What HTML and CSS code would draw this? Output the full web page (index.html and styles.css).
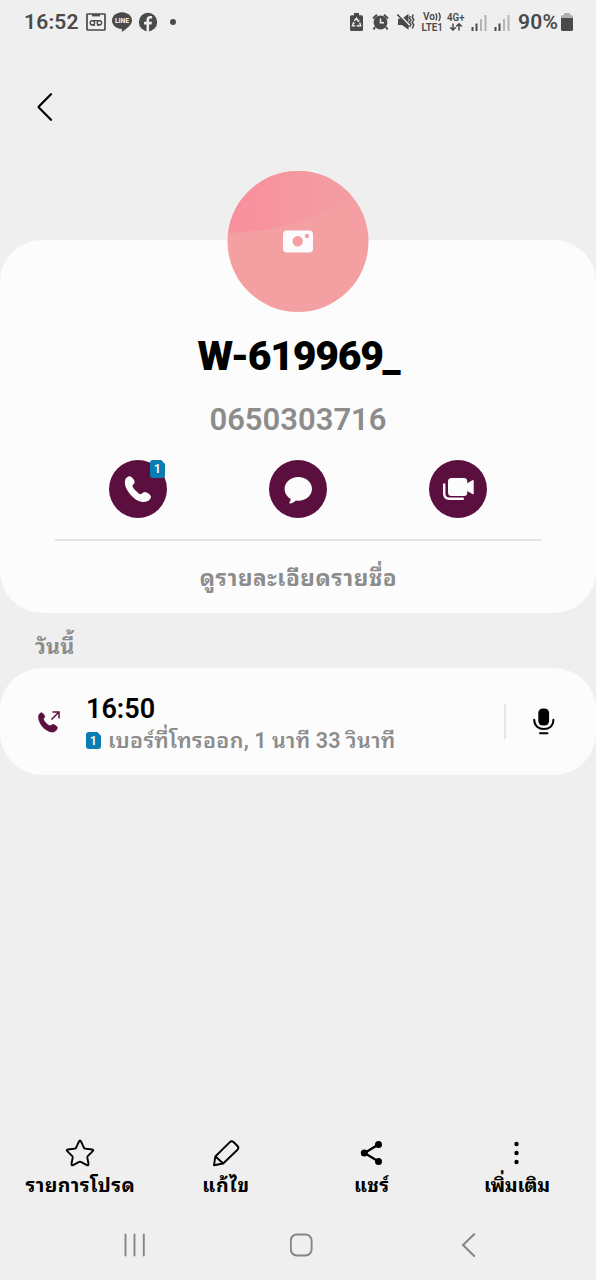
FILE: index.html
```html
<!DOCTYPE html>
<html lang="th">
<head>
<meta charset="utf-8">
<title>W-619969_</title>
<link rel="stylesheet" href="styles.css">
</head>
<body>
<div class="screen">
  <div class="status">
    <div class="status-left">
      <span class="clock">16:52</span>
      <svg class="s-box" width="20" height="18" viewBox="0 0 20 18"><rect x="1" y="1" width="18" height="16" rx=".6" fill="none" stroke="#4a4a4a" stroke-width="1.7"/><path d="M6 1h8v2.400H6z" fill="#4a4a4a"/><g fill="none" stroke="#4a4a4a" stroke-width="1.400"><circle cx="6.400" cy="9.800" r="2.200"/><circle cx="13.400" cy="9.800" r="2.200"/><path d="M6 7.600h8M6.400 12h2.600M11 12h2.400"/></g></svg>
      <svg class="s-line" width="20" height="20" viewBox="0 0 20 20"><path d="M10 .2c5.500 0 10 3.600 10 8.200 0 4.700-5.500 8-9.600 11.200-.7.300-.7-.3-.6-1.200l.1-1.500C4.500 16.600 0 13.200 0 8.400 0 3.800 4.500.2 10 .2z" fill="#4a4a4a"/><text x="10" y="11" class="line-word" text-anchor="middle" textLength="14" lengthAdjust="spacingAndGlyphs">LINE</text></svg>
      <svg class="s-fb" width="20" height="20" viewBox="0 0 20 20"><circle cx="10" cy="10" r="9.200" fill="#4a4a4a"/><path d="M8.500 19.500v-7H6V9.800h2.500V7.900c0-2.800 1.500-4 3.700-4 .8 0 1.500.1 1.900.2v2.300h-1.300c-1.300 0-1.700.6-1.700 1.600v1.800H14l-.5 2.700h-2.400v7z" fill="#efefef"/></svg>
      <span class="dot"></span>
    </div>
    <div class="status-right">
      <svg width="13" height="18" viewBox="0 0 13 18"><path d="M4 0h5v2.300h2.500A1.500 1.500 0 0 1 13 3.800v12.700a1.500 1.500 0 0 1-1.500 1.500h-10A1.500 1.500 0 0 1 0 16.500V3.800a1.500 1.500 0 0 1 1.500-1.500H4z" fill="#4a4a4a"/><g fill="none" stroke="#efefef" stroke-width="1.300"><path d="M4.300 8 6.500 5.200 8.600 8.300M9.600 9.500l1.200 3.300H7.200M5.400 12.800H2.300L3.700 9.700"/><path d="m7.300 8.500 1.500-.1.300-1.600M8.300 11.500l-1.200 1.300 1.200 1.200M2.500 10l1.400-.6.800 1.300" stroke-width=".8"/></g></svg>
      <svg class="s-alarm" width="17" height="18" viewBox="0 0 17 18"><circle cx="8.500" cy="9.500" r="6.900" fill="#4a4a4a"/><path d="M1 5.500 5 1.700M16 5.500l-4-3.800M3 14l-1.500 2.500M14 14l1.500 2.500" stroke="#4a4a4a" stroke-width="2" fill="none"/><path d="M8.500 5.500v4.300h3.500" stroke="#efefef" stroke-width="1.500" fill="none"/></svg>
      <svg class="s-mute" width="18" height="18" viewBox="0 0 18 18"><path d="M1 5.800h4l6.500-5v16L5 12H1z" fill="#4a4a4a"/><path d="M1.600 .6 12.800 12.500" stroke="#efefef" stroke-width="1.500"/><path d="M.4 1.600 12 14" stroke="#4a4a4a" stroke-width="1.600"/><path d="m13.300 3-1 2 1.600 2-1.600 2.300 1.600 2.200-1.200 2.200M16.200 1.500l-1 2.700 1.600 2.600-1.600 2.600 1.600 2.600-1.600 3.500" fill="none" stroke="#4a4a4a" stroke-width="1.500"/></svg>
      <svg class="s-volte" width="23" height="20" viewBox="0 0 23 20"><g class="tiny"><text x="2" y="8" textLength="12" lengthAdjust="spacingAndGlyphs">Vo</text><text x="0.500" y="18.800" textLength="21.500" lengthAdjust="spacingAndGlyphs">LTE1</text></g><path d="M14.700 1.300q2.200 3.500 0 7M17.700.6q2.800 4.300 0 8.600" fill="none" stroke="#4a4a4a" stroke-width="1.400"/></svg>
      <svg class="s-net" width="18" height="20" viewBox="0 0 18 20"><text class="tiny" x="0" y="9" textLength="17.500" lengthAdjust="spacingAndGlyphs">4G+</text><path d="M6 11.500v6M3.200 15.200 6 18l2.800-2.800M12 18.500v-6M9.200 14.500 12 11.700l2.800 2.800" fill="none" stroke="#4a4a4a" stroke-width="1.500"/></svg>
      <svg class="s-sig" width="16" height="17" viewBox="0 0 16 17"><path d="M.5 13h2v4h-2zM4.500 9.500h2V17h-2z" fill="#4a4a4a"/><path d="M9 5h2v12H9zM13.500 1h2v16h-2z" fill="#b4b4b4"/></svg>
      <svg class="s-sig2" width="16" height="17" viewBox="0 0 16 17"><path d="M.5 13h2v4h-2zM4.500 9.500h2V17h-2z" fill="#4a4a4a"/><path d="M9 5h2v12H9zM13.500 1h2v16h-2z" fill="#b4b4b4"/></svg>
      <span class="pct">90%</span>
      <svg class="s-bat" width="12" height="18" viewBox="0 0 12 18"><path d="M3 0h6v2h1.500A1.500 1.500 0 0 1 12 3.500V6H0V3.500A1.500 1.500 0 0 1 1.500 2H3z" fill="#b0b0b0"/><path d="M0 5h12v11.500a1.500 1.500 0 0 1-1.500 1.500h-9A1.500 1.500 0 0 1 0 16.500z" fill="#4a4a4a"/></svg>
    </div>
  </div>

  <div class="header">
    <svg width="16" height="28" viewBox="0 0 16 28"><path d="M14 1.200 2.100 13.200q-.8.800 0 1.600L14 26.800" fill="none" stroke="#000" stroke-width="2.200" stroke-linecap="round"/></svg>
  </div>

  <main class="profile">
    <svg class="avatar" width="142" height="142" viewBox="0 0 142 142">
      <defs>
        <linearGradient id="sweep" x1="0" x2="1" y1="0" y2="0"><stop offset="0" stop-color="#f98f9d"/><stop offset=".25" stop-color="#f8929e"/><stop offset=".5" stop-color="#f5989f"/><stop offset=".85" stop-color="#f49da1"/></linearGradient>
        <clipPath id="disc"><circle cx="71" cy="71.500" r="70.500"/></clipPath>
      </defs>
      <g clip-path="url(#disc)"><path d="M0 0h142v142H0z" fill="#f49fa2"/><path d="M0 0h142v11Q90 61 0 63z" fill="url(#sweep)"/></g>
      <rect x="56" y="60.500" width="30" height="22" rx="4" fill="#fcfcfc"/><circle cx="70.700" cy="71.200" r="5.200" fill="#f49fa2"/><circle cx="80" cy="66" r="2.200" fill="#f49fa2"/>
    </svg>
    <h1 class="name">W-619969_</h1>
    <p class="phone">0650303716</p>
    <div class="actions">
      <div class="action">
        <svg width="58" height="58" viewBox="0 0 58 58"><circle cx="29" cy="29" r="29" fill="#5a0f3f"/><path d="M16.300 19.500c.6-1.700 2.500-3.300 4.500-3.300 1.600 0 4.900 3.900 4.900 5.700 0 2-2.300 2.600-2.300 4.100 0 1.800 6.300 8.200 8.200 8.200 1.500 0 2.400-2.100 4.400-2.100 1.800 0 6.200 3.100 6 4.900-.3 2.200-2.600 4-4.500 4.600-5.400 1.500-11-1.700-14.800-5.700-4.100-4.300-8.300-10.800-6.400-16.400z" fill="#fcfcfc"/></svg>
        <span class="sim sim-big">1</span>
      </div>
      <div class="action">
        <svg width="58" height="58" viewBox="0 0 58 58"><circle cx="29" cy="29" r="29" fill="#5a0f3f"/><path d="M29.300 17c7.600 0 13.700 5.200 13.700 11.800s-6.100 12-13.700 12c-.8 0-1.700-.1-2.400-.3-1.500 1.200-3.600 2.900-6 3-.8 0-.9-.6-.4-1.200.9-1 1.200-2.200 1-3.500-3.600-2.100-5.900-5.600-5.900-10C15.600 22.200 21.700 17 29.300 17z" fill="#fcfcfc"/></svg>
      </div>
      <div class="action">
        <svg width="58" height="58" viewBox="0 0 58 58"><circle cx="29" cy="29" r="29" fill="#5a0f3f"/><path d="M22.500 18h12.500q3.300 0 3.300 3.500v1.700l5-3q1.400-.6 1.400.8v12.200q0 1.400-1.400.7l-5-2.900v1.500q0 3.500-3.300 3.500H22.500q-3.500 0-3.500-3.500v-11q0-3.500 3.500-3.500z" fill="#fcfcfc"/><path d="M15.200 24.500v9q0 5.200 5.200 5.200h13.400" fill="none" stroke="#fcfcfc" stroke-width="2.400" stroke-linecap="round"/></svg>
      </div>
    </div>
    <div class="rule"></div>
    <div class="details">ดูรายละเอียดรายชื่อ</div>
  </main>

  <h2 class="day">วันนี้</h2>

  <section class="call">
    <svg class="outgoing" width="24" height="24" viewBox="0 0 24 24"><path d="M1.200 3.300C2 2.200 3 1.700 3.800 1.900c1.300.3 3 2.700 2.900 3.800-.1 1.100-1.400 1.600-1.200 2.700.4 1.700 4.600 6.300 6.500 6.300 1.200 0 1.700-1.400 3-1.300 1.300.1 4.500 2 4.400 3.200-.1 1.500-1.700 3.600-3.300 4.200-3.500 1-8.400-1.800-11.100-4.600C2.100 13-.6 7.300 1.200 3.300z" fill="#5a0f3f" stroke="#5a0f3f" stroke-width=".7" transform="translate(1 1)"/><path d="m14.500 9.500 7.300-7.300M15.500 2h6.500v6.500" fill="none" stroke="#5a0f3f" stroke-width="1.500"/></svg>
    <div class="call-body">
      <div class="call-time">16:50</div>
      <div class="call-meta"><span class="sim">1</span><span class="call-text">เบอร์ที่โทรออก, 1 นาที 33 วินาที</span></div>
    </div>
    <div class="call-record">
      <svg width="22" height="28" viewBox="0 0 22 28"><rect x="5.300" y=".5" width="10.800" height="17" rx="4.500" fill="#000"/><path d="M1.200 11.800c0 6 4.400 9.200 9.700 9.200s9.500-3.200 9.500-9.200" fill="none" stroke="#000" stroke-width="2" stroke-linecap="round"/><path d="M7 25.200h7.500" stroke="#000" stroke-width="2" stroke-linecap="round"/></svg>
    </div>
  </section>

  <footer class="toolbar">
    <div class="tool"><svg width="30" height="30" viewBox="0 0 30 30"><path d="M14 3.500q1-2 2 0l3 6.300q.3.700 1 .8l7 .9q2 .4.600 1.800l-4.900 4.900q-.5.500-.4 1.200l1.200 6.500q.2 2.100-1.600 1.200l-6.100-3.200q-.8-.4-1.600 0l-6.100 3.200q-1.800.9-1.600-1.200l1.200-6.500q.1-.7-.4-1.200l-4.900-4.900Q1 11.900 3 11.500l7-.9q.7-.1 1-.8z" fill="none" stroke="#000" stroke-width="1.900" stroke-linejoin="round"/></svg><span class="t1">รายการโปรด</span></div>
    <div class="tool"><svg width="30" height="30" viewBox="0 0 30 30"><path d="M3 27.300 4.300 18.500 18.600 4.300q1.900-2 3.900-.3l4 4q1.800 1.800 0 3.700L12.200 25.500z M4.500 18.500l7.700 7" fill="none" stroke="#000" stroke-width="1.900" stroke-linejoin="round"/></svg><span class="t2">แก้ไข</span></div>
    <div class="tool"><svg width="30" height="30" viewBox="0 0 30 30"><path d="M22.500 6.500 8.500 15l14 8.500" fill="none" stroke="#000" stroke-width="2.300"/><g fill="#000"><circle cx="22.500" cy="6.400" r="3.500"/><circle cx="8.300" cy="15" r="3.500"/><circle cx="22.500" cy="23.400" r="3.500"/></g></svg><span class="t3">แชร์</span></div>
    <div class="tool"><svg width="30" height="30" viewBox="0 0 30 30"><circle cx="14.500" cy="6" r="2.200"/><circle cx="14.500" cy="15" r="2.200"/><circle cx="14.500" cy="24" r="2.200"/></svg><span class="t4">เพิ่มเติม</span></div>
  </footer>

  <nav class="nav">
    <svg width="24" height="24" viewBox="0 0 24 24"><path d="M2.500 1.500v21M11.500 1.500v21M20.800 1.500v21" stroke="#858585" stroke-width="1.900" stroke-linecap="round"/></svg>
    <svg width="24" height="24" viewBox="0 0 24 24"><rect x=".8" y="1.500" width="20.800" height="21" rx="6" fill="none" stroke="#858585" stroke-width="1.900"/></svg>
    <svg width="24" height="24" viewBox="0 0 24 24"><path d="M17.200 1.200 6 12l11.200 11" fill="none" stroke="#858585" stroke-width="2" stroke-linecap="round"/></svg>
  </nav>
</div>
</body>
</html>
```
FILE: styles.css
```css
* { box-sizing: border-box; margin: 0; padding: 0; }
body { background: #efefef; font-family: Roboto, "Noto Sans Thai Looped", "Noto Looped Thai", Loma, Waree, "Noto Sans Thai", "Noto Sans", sans-serif; }
svg { display: block; flex: none; }
.screen { width: 596px; height: 1280px; display: flex; flex-direction: column; overflow: hidden; white-space: nowrap; }

.status { height: 44px; padding: 0 23px 0 24px; display: flex; justify-content: space-between; color: #4a4a4a; font-size: 21px; font-weight: 600; line-height: 44px; }
.status-left, .status-right { display: flex; align-items: center; }
.clock { width: 62px; letter-spacing: .2px; }
.s-line, .s-fb { margin-left: 6px; }
.dot { width: 6px; height: 6px; border-radius: 50%; background: #4a4a4a; margin-left: 12px; }
.line-word { font-size: 6.5px; font-weight: 800; fill: #efefef; }
.tiny { font-size: 10.5px; font-weight: 600; fill: #4a4a4a; }
.s-volte .tiny { font-size: 10px; }
.s-volte, .s-net { overflow: visible; }
.s-alarm { margin-left: 9px; }
.s-mute { margin-left: 8px; }
.s-volte { margin-left: 6px; }
.s-net { margin-left: 3px; }
.s-sig { margin-left: 6px; }
.s-sig2 { margin-left: 7px; }
.pct { width: 43px; margin-left: 8px; letter-spacing: .2px; }

.header { height: 196px; padding: 49px 0 0 37px; }

.profile { height: 373px; background: #fcfcfc; border-radius: 42px; display: flex; flex-direction: column; align-items: center; flex: none; }
.avatar { margin-top: -70px; }
.name { margin-top: 20px; height: 48px; padding-left: 1px; font-size: 41px; line-height: 48px; font-weight: 900; letter-spacing: -1.3px; color: #000; }
.phone { margin-top: 22px; height: 36px; font-size: 31px; line-height: 36px; font-weight: 600; color: #8c8c8c; }
.actions { width: 378px; margin-top: 22px; display: flex; justify-content: space-between; }
.action { position: relative; }
.sim { display: block; width: 15px; height: 17px; border-radius: 3px; background: #0a7cb0; clip-path: polygon(0 0, 75% 0, 100% 22%, 100% 100%, 0 100%); color: #fff; font-size: 12px; font-weight: 600; line-height: 18px; text-align: center; flex: none; }
.sim-big { position: absolute; left: 41px; top: 0; width: 15px; height: 18px; line-height: 19px; }
.rule { width: 487px; height: 2px; margin-top: 21px; background: #e5e5e5; }
.details { margin-top: 20px; height: 34px; padding-left: 1px; font-size: 22.5px; line-height: 34px; font-weight: 700; letter-spacing: .6px; color: #8c8c8c; }

.day { height: 55px; padding: 17px 0 0 35px; font-size: 21.5px; line-height: 34px; font-weight: 700; letter-spacing: .2px; color: #8c8c8c; }

.call { height: 107px; background: #fcfcfc; border-radius: 42px; display: flex; align-items: center; padding-left: 37px; flex: none; }
.call-body { margin-left: 25px; padding-top: 6px; width: 418px; }
.call-time { height: 32px; font-size: 27px; line-height: 32px; font-weight: 600; color: #000; }
.call-meta { height: 32px; display: flex; align-items: center; gap: 7px; font-size: 21.5px; color: #8c8c8c; font-weight: 600; line-height: 32px; }
.call-text { letter-spacing: .35px; word-spacing: -.6px; }
.call-record { height: 35px; border-left: 2px solid #e5e5e5; padding: 4px 0 0 27px; }

.toolbar { margin-top: auto; height: 70px; padding: 0 7px; display: grid; grid-template-columns: repeat(4, 145.7px); }
.tool { display: flex; flex-direction: column; align-items: center; gap: 2px; font-size: 19.5px; line-height: 32px; font-weight: 700; color: #000; }
.t1 { letter-spacing: .5px; padding-left: 1px; }
.t2 { letter-spacing: .8px; padding-left: 1px; }
.t3 { letter-spacing: .4px; padding-left: 1px; }
.t4 { letter-spacing: -.2px; }
.nav { height: 72px; padding: 25px 44px 0 51px; display: grid; grid-template-columns: repeat(3, 167px); justify-items: center; }
```
